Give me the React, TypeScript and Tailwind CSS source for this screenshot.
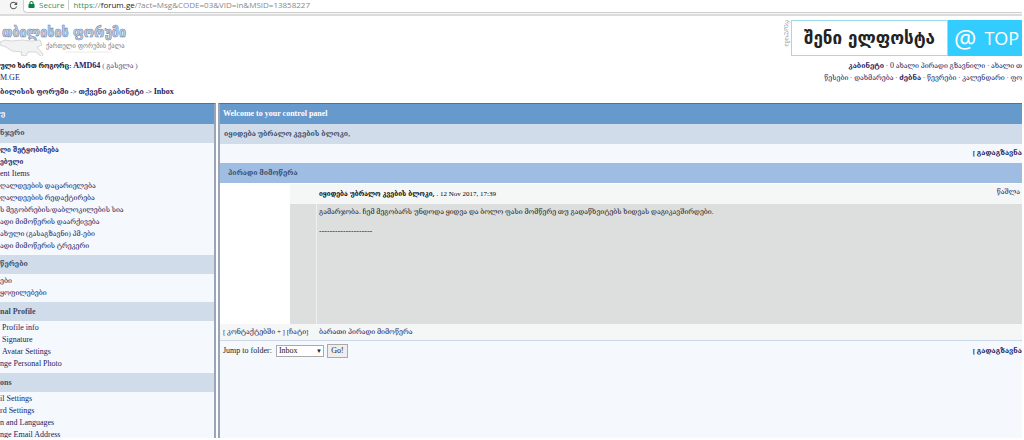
import { FaLock } from "react-icons/fa";
import { MdRefresh } from "react-icons/md";

type MenuLink = { text: string; bold?: boolean; indent?: boolean };
type MenuSection = { title: string; latin?: boolean; links: MenuLink[] };

const sections: MenuSection[] = [
  {
    title: "ნჯერი",
    links: [
      { text: "ლი შეტყობინება", bold: true },
      { text: "ებული", bold: true },
      { text: "ent Items" },
      { text: "ღალდეების დაცარიელება" },
      { text: "ღალდეების რედაქტირება" },
      { text: "ს მეგობრების/დაბლოკილების სია" },
      { text: "ადი მიმოწერის დაარქივება" },
      { text: "ახული (გასაგზავნი) პმ-ები" },
      { text: "ადი მიმოწერის ტრეკერი" },
    ],
  },
  { title: "წერები", links: [{ text: "ები" }, { text: "ყოფილებები" }] },
  {
    title: "nal Profile",
    latin: true,
    links: [
      { text: "Profile info", indent: true },
      { text: "Signature", indent: true },
      { text: "Avatar Settings", indent: true },
      { text: "nge Personal Photo" },
    ],
  },
  {
    title: "ons",
    latin: true,
    links: [
      { text: "il Settings" },
      { text: "rd Settings" },
      { text: "n and Languages" },
      { text: "nge Email Address" },
    ],
  },
];

const isLatin = (text: string) => /^[A-Za-z]/.test(text);

const AddressBar = () => (
  <div className="flex h-4 items-start border-b-2 border-[#dcdcdc] bg-[#f6f6f6] font-['Open_Sans',sans-serif] text-[8px] leading-[10px]">
    <MdRefresh className="mr-1 ml-2 h-[11px] w-[11px] shrink-0 text-[#555]" />
    <div className="flex h-[13px] grow items-start rounded-bl border-b border-l border-[#cfcfcf] bg-white pl-1">
      <FaLock className="mt-px mr-1 h-[7px] w-[7px] text-[#0b8043]" />
      <span className="mr-1 text-[#3c8f63]">Secure</span>
      <span className="border-l border-[#ccc] pl-1 text-[#888]">
        <span className="text-[#3c8f63]">https</span>://<span className="text-[#222]">forum.ge</span>/?act=Msg&amp;CODE=03&amp;VID=in&amp;MSID=13858227
      </span>
    </div>
  </div>
);

const Logo = () => (
  <svg viewBox="0 0 132 36" className="h-9 w-[132px]" role="img" aria-label="თბილისის ფორუმი">
    <path
      d="M0 22 L5 20 L12 21 L22 20 L32 21 L40 20 L42 25 L37 27 L43 34 L42 37 L36 32 L28 32 L26 36 L21 35 L22 32 L12 31 L6 27 L0 25Z"
      fill="#f1f2f2"
      stroke="#c8c8c8"
      strokeWidth="0.7"
    />
    <path d="M66 32 H112" stroke="#ececdf" strokeWidth="1" />
    <text x="2" y="17" fontFamily="DejaVu Sans Condensed, DejaVu Sans" fontSize="14" fontWeight="bold" fill="#c3d6f0" stroke="#7286a8" strokeWidth="0.6">
      თბილისის ფორუმი
    </text>
    <text x="46" y="28" fontFamily="DejaVu Sans Condensed, DejaVu Sans" fontSize="7" fill="#777">
      ქართული ფორუმის ქალა
    </text>
  </svg>
);

const Banner = () => (
  <a href="#mail" className="flex h-9 items-stretch">
    <span className="w-[7px] overflow-hidden font-['DejaVu_Sans',sans-serif] text-[6px] leading-[7px] text-[#999] [writing-mode:vertical-rl]">რეკლამა</span>
    <span className="flex w-[157px] items-center justify-center border border-[#9ddcec] font-['DejaVu_Sans',sans-serif] text-[17px] font-bold text-[#222]">
      შენი ელფოსტა
    </span>
    <span className="flex w-[74px] items-center gap-2 bg-[#33ccff] pl-1.5 font-['Open_Sans',sans-serif] text-[18px] text-white">
      <span className="text-[25px]">@</span>TOP
    </span>
  </a>
);

const Sidebar = () => (
  <aside className="w-[216px] shrink-0 border-t border-r-2 border-t-[#4f7396] border-r-[#9aa5b8] bg-[#f5f9fd]">
    <h2 className="h-5 bg-[#6699cc] font-bold leading-5 text-white">უ</h2>
    {sections.map((section) => (
      <section key={section.title}>
        <h3 className={`bg-[#d1dceb] font-bold leading-[19px] text-[#3a4f6c] ${section.latin ? "text-[8px]" : ""}`}>{section.title}</h3>
        <ul className="pt-px pb-[3px]">
          {section.links.map((link) => (
            <li
              key={link.text}
              className={`${isLatin(link.text) ? "text-[8px]" : ""} ${link.bold ? "font-['DejaVu_Serif_Condensed','DejaVu_Serif',serif] font-bold" : ""} ${link.indent ? "pl-0.5" : ""}`}
            >
              <a href="#menu">{link.text}</a>
            </li>
          ))}
        </ul>
      </section>
    ))}
  </aside>
);

const Forward = () => (
  <span className="font-bold">
    [ <a href="#forward">გადაგზავნა</a>
  </span>
);

const Message = () => (
  <section>
    <h3 className="bg-[#9fbde3] pl-2 font-bold leading-5 text-[#3a4f6c]">პირადი მიმოწერა</h3>
    <article className="flex border-t border-white">
      <div className="w-[70px] shrink-0 bg-white"></div>
      <div className="grow">
        <div className="flex justify-between bg-[#f5f7f7] pr-0.5 pl-[29px] leading-5 text-black">
          <p>
            <b className="font-['DejaVu_Serif_Condensed','DejaVu_Serif',serif]">იყიდება უბრალო კვების ბლოკი,</b> . 12 Nov 2017, 17:39
          </p>
          <a href="#delete" className="leading-4 text-[#222260]">წაშლა</a>
        </div>
        <div className="flex min-h-[120px] bg-[#dddfdf]">
          <div className="w-[27px] shrink-0 border-r border-[#eef0f0]"></div>
          <div className="pt-0.5 pl-0.5 text-[#222]">
            <p>გამარჯობა. ჩემ მეგობარს უნდოდა ყიდვა და ბოლო ფასი მომწერე თუ გადაწხვიტებს ხიდვას დაგიკავშირდები.</p>
            <p className="mt-2 text-[8px] text-[#222260]">--------------------</p>
          </div>
        </div>
      </div>
    </article>
    <div className="flex border-b border-[#cdd8e8] bg-[#f5f7f7] pl-[3px] leading-4">
      <p className="w-24">
        [ <a href="#contacts">კონტაქტებში +</a> ] [<a href="#chat">ჩატი</a>]
      </p>
      <p>ბარათი პირადი მიმოწერა</p>
    </div>
  </section>
);

const JumpBar = () => (
  <form className="flex items-center justify-between pt-[3px] pl-[3px]">
    <div className="flex items-center text-[8px] text-[#222]">
      <label htmlFor="folder" className="mr-1">Jump to folder:</label>
      <div className="relative mr-[3px]">
        <select id="folder" className="block h-3 w-12 appearance-none border border-[#aaa] bg-white pl-0.5 leading-[10px]">
          <option>Inbox</option>
        </select>
        <span className="pointer-events-none absolute top-0 right-0.5 text-[6px]">▼</span>
      </div>
      <button type="button" className="h-[14px] w-[21px] border border-[#aaa] bg-[#eee] leading-3">Go!</button>
    </div>
    <Forward />
  </form>
);

const App = () => {
  return (
    <main className="flex h-screen flex-col overflow-hidden bg-white pr-0.5 pb-0.5 font-['Liberation_Serif','DejaVu_Serif',serif] text-[7px] leading-3 text-[#222260]">
      <AddressBar />
      <header className="flex justify-between pt-1">
        <div>
          <Logo />
          <p className="mt-1 text-black">
            <b className="font-['Liberation_Serif','DejaVu_Serif_Condensed','DejaVu_Serif',serif]">
              ული ხართ როგორც: <a href="#user" className="text-[8px] text-[#222272]">AMD64</a>
            </b>{" "}
            <span className="text-[#4c4c80]">( <a href="#logout">გასვლა</a> )</span>
          </p>
          <a href="#forum" className="block text-[8px]">M.GE</a>
        </div>
        <div className="flex flex-col items-end">
          <Banner />
          <nav className="mt-1 text-right whitespace-nowrap">
            <p>
              <a href="#cp" className="font-bold">კაბინეტი</a> · <span className="text-[8px]">0</span> <a href="#new">ახალი პირადი გზავნილი</a> · <a href="#posts">ახალი თ</a>
            </p>
            <p>
              <a href="#rules">წესები</a> · <a href="#help">დახმარება</a> · <a href="#search" className="font-bold">ძებნა</a> · <a href="#members">წევრები</a> · <a href="#calendar">კალენდარი</a> · ფო
            </p>
          </nav>
        </div>
      </header>
      <p className="pt-0.5 pb-[5px] font-bold">
        ბილისის ფორუმი -&gt; თქვენი კაბინეტი -&gt; <span className="text-[8px]">Inbox</span>
      </p>
      <div className="flex min-h-0 grow gap-0.5 overflow-hidden">
        <Sidebar />
        <section className="grow border-t border-l-2 border-t-[#4f7396] border-l-[#9aa5b8] bg-[#f5f9fd]">
          <h2 className="h-5 bg-[#6699cc] pl-[3px] text-[8px] font-bold leading-5 text-white">Welcome to your control panel</h2>
          <h3 className="bg-[#d1dceb] pl-1 font-bold leading-5 text-[#3a4f6c]">იყიდება უბრალო კვების ბლოკი,</h3>
          <p className="text-right leading-[19px]">
            <Forward />
          </p>
          <Message />
          <JumpBar />
        </section>
      </div>
    </main>
  );
};

export default App;
